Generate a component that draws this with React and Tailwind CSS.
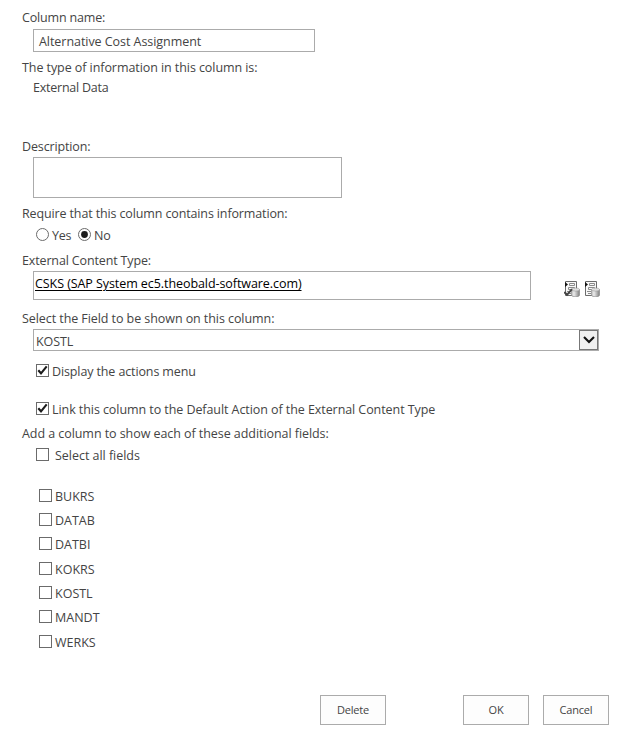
const fields = ['BUKRS', 'DATAB', 'DATBI', 'KOKRS', 'KOSTL', 'MANDT', 'WERKS'];

function Label({ className = '', children }) {
  return <div className={`h-[18px] pl-[22px] leading-[18px] whitespace-nowrap ${className}`}>{children}</div>;
}

function Check({ checked }) {
  return (
    <svg className="size-[13px] shrink-0" viewBox="0 0 13 13">
      <rect x=".5" y=".5" width="12" height="12" fill="#fff" stroke="#6b6b6b" />
      {checked && <path d="M2.3 6.2 5 9.3 10.7 2.4" fill="none" stroke="#1c1c1c" strokeWidth="2.1" />}
    </svg>
  );
}

function Radio({ checked }) {
  return (
    <svg className="size-[13px] shrink-0" viewBox="0 0 13 13">
      <circle cx="6.5" cy="6.5" r="6" fill="#fff" stroke="#6b6b6b" />
      {checked && <circle cx="6.5" cy="6.5" r="3.4" fill="#1c1c1c" />}
    </svg>
  );
}

function DataIcon({ id, check }) {
  return (
    <svg className="size-4 shrink-0" viewBox="0 0 16 16">
      <defs>
        <linearGradient id={id}>
          <stop offset="0" stopColor="#b8b8b8" />
          <stop offset=".3" stopColor="#ececec" />
          <stop offset="1" stopColor="#808080" />
        </linearGradient>
      </defs>
      <path d="M1.5 .5H12.5V14.5H1.5Z" fill="#f8f8f8" stroke="#6c6c6c" />
      <path d="M1 1V6L4 3.500Z" fill="#111" />
      <path d="M5.500 2.500H10.500V4.500H5.500ZM4.500 6.500H10.500V8.500H4.500ZM3 10.500H7M4 12.500H7" fill="none" stroke="#8b8b8b" />
      <path d="M7.500 8.500V14.200C7.500 16.200 15.500 16.200 15.500 14.200V8.500Z" fill={`url(#${id})`} stroke="#868686" strokeWidth=".6" />
      <ellipse cx="11.500" cy="8.500" rx="4" ry="1.600" fill="#dedede" stroke="#909090" strokeWidth=".5" />
      {check && <path d="M.3 11 3 13.800 8 8.200" fill="none" stroke="#444" strokeWidth="2" />}
    </svg>
  );
}

function Button({ className = '', children }) {
  return (
    <button className={`h-[30px] w-[66px] border border-[#ababab] bg-[#fdfdfd] text-[11px] leading-[28px] tracking-[-0.2px] ${className}`}>
      {children}
    </button>
  );
}

export default function App() {
  return (
    <div className="h-[739px] w-[623px] overflow-hidden bg-white pt-[9px] font-['Open_Sans','Noto_Sans',sans-serif] text-[12.5px] tracking-[-0.07px] text-[#444]">
      <Label className="tracking-[-0.17px]">Column name:</Label>
      <div className="mt-[2px] ml-[33px] h-[23px] w-[282px] border border-[#ababab] pl-[5px] leading-[23px] tracking-[-0.05px] whitespace-nowrap">
        Alternative Cost Assignment
      </div>
      <Label className="mt-[7px]">The type of information in this column is:</Label>
      <div className="mt-[2px] ml-[33px] h-[18px] leading-[18px] tracking-[-0.23px]">External Data</div>

      <Label className="mt-[41px] tracking-[-0.14px]">Description:</Label>
      <div className="mt-px ml-[33px] h-[41px] w-[309px] border border-[#ababab]" />

      <Label className="mt-[7px] tracking-[-0.13px]">Require that this column contains information:</Label>
      <div className="mt-[3px] ml-[36px] flex h-[20px] leading-[20px]">
        <div className="flex w-[42px] gap-[3px] pt-[2px]">
          <Radio />
          <span className="-mt-[2px] tracking-[-0.2px]">Yes</span>
        </div>
        <div className="flex gap-[3px] pt-[2px]">
          <Radio checked />
          <span className="-mt-[2px]">No</span>
        </div>
      </div>

      <Label className="mt-[6px] tracking-[-0.14px]">External Content Type:</Label>
      <div className="mt-px flex pl-[33px]">
        <div className="h-[29px] w-[498px] border border-[#ababab] pl-px leading-[24px] whitespace-nowrap text-black">
          <span className="underline decoration-1 underline-offset-2">CSKS (SAP System ec5.theobald-software.com)</span>
        </div>
        <div className="ml-[33px] flex gap-[4px] pt-[10px]">
          <DataIcon id="check-cylinder" check />
          <DataIcon id="pick-cylinder" />
        </div>
      </div>

      <Label className="mt-[10px]">Select the Field to be shown on this column:</Label>
      <div className="mt-px ml-[33px] flex h-[22px] w-[566px] justify-between border border-[#ababab] pl-[2px] leading-[23px]">
        <span>KOSTL</span>
        <div className="flex h-[20px] w-[19px] items-center justify-center border border-[#777] bg-[#f0f0f0]">
          <svg className="h-[8px] w-[12px]" viewBox="0 0 12 8">
            <path d="M1 1 6 6 11 1" fill="none" stroke="#111" strokeWidth="2.1" />
          </svg>
        </div>
      </div>

      <div className="mt-[13px] ml-[36px] flex h-[13px] gap-[3px] leading-[15px] tracking-[-0.12px] whitespace-nowrap">
        <Check checked />
        <span>Display the actions menu</span>
      </div>
      <div className="mt-[25px] ml-[36px] flex h-[13px] gap-[3px] leading-[15px] whitespace-nowrap">
        <Check checked />
        <span>Link this column to the Default Action of the External Content Type</span>
      </div>
      <Label className="mt-[10px] tracking-[-0.06px]">Add a column to show each of these additional fields:</Label>
      <div className="mt-[5px] ml-[36px] flex h-[13px] gap-[6px] leading-[15px] tracking-[-0.03px]">
        <Check />
        <span>Select all fields</span>
      </div>

      <div className="mt-[27.7px] ml-[39px] flex flex-col gap-[11.33px] tracking-[0px]">
        {fields.map((name) => (
          <div key={name} className="flex h-[13px] gap-[3px] leading-[15px]">
            <Check />
            <span>{name}</span>
          </div>
        ))}
      </div>

      <div className="mt-[47.3px] flex pl-[320px]">
        <Button>Delete</Button>
        <Button className="ml-[77px]">OK</Button>
        <Button className="ml-[14px]">Cancel</Button>
      </div>
    </div>
  );
}
